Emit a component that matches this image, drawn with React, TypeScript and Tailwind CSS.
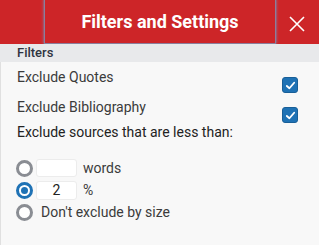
export default function App() {
  return (
    <div className="w-[319px] h-[245px] flex flex-col bg-[#f8f8f8] font-['Roboto',sans-serif] text-[14px] text-[#3b3b3b]">
      {/* Header */}
      <div className="h-[44px] shrink-0 bg-[#cd2528] flex items-start">
        <div className="ml-[45px] w-[230px] h-[43px] flex items-center justify-center text-white text-[18px] font-bold shadow-[0_0_1px_1px_#8a7f9c,0_0_3px_1px_#7d8bb8]">
          Filters and Settings
        </div>
        <button className="ml-[14px] mt-[16px] w-[16px] h-[16px]" aria-label="Close">
          <svg viewBox="0 0 16 16" className="w-4 h-4" fill="none" stroke="white" strokeWidth="1.6">
            <path d="M1 1 L15 15 M15 1 L1 15" />
          </svg>
        </button>
      </div>

      {/* Section label */}
      <div className="h-[18px] shrink-0 bg-[#e8e9eb] pl-[17px] leading-[18px] text-[13px] font-medium text-[#2f3440]">
        Filters
      </div>

      {/* Body */}
      <div className="flex-1 border-l border-[#e0e0e0] pt-[7px] pr-[21px]">
        <div className="flex items-start justify-between">
          <span className="pl-[16px] leading-[16px]">Exclude Quotes</span>
          <Checkbox />
        </div>
        <div className="flex items-start justify-between mt-[6px]">
          <span className="pl-[16px] leading-[16px]">Exclude Bibliography</span>
          <Checkbox />
        </div>
        <div className="mt-[1px] pl-[16px] leading-[16px] text-[#222]">Exclude sources that are less than:</div>

        <div className="mt-[19px] pl-[15px] flex flex-col gap-[4px]">
          <div className="flex items-center h-[18px]">
            <Radio />
            <div className="ml-[3px] w-[41px] h-[18px] bg-white rounded-[3px] border border-[#ececec]" />
            <span className="ml-[6px]">words</span>
          </div>
          <div className="flex items-center h-[19px]">
            <Radio checked />
            <div className="ml-[3px] w-[41px] h-[19px] bg-white rounded-[3px] border border-[#ececec] flex items-center justify-center text-[#222]">
              2
            </div>
            <span className="ml-[6px]">%</span>
          </div>
          <div className="flex items-center h-[18px] -mt-[1px]">
            <Radio />
            <span className="ml-[8px]">Don't exclude by size</span>
          </div>
        </div>
      </div>
    </div>
  )
}

function Checkbox() {
  return (
    <div className="mt-[8px] w-[16px] h-[16px] rounded-[3px] bg-[#1f72b5] border border-[#195f98] flex items-center justify-center">
      <svg viewBox="0 0 12 12" className="w-[11px] h-[11px]" fill="none" stroke="white" strokeWidth="2" strokeLinecap="round" strokeLinejoin="round">
        <path d="M2 6.5 L4.8 9 L10 3" />
      </svg>
    </div>
  )
}

function Radio({ checked = false }: { checked?: boolean }) {
  return (
    <div
      className={`w-[17px] h-[17px] rounded-full border-[3px] bg-white flex items-center justify-center shrink-0 ${
        checked ? 'border-[#1f72b5]' : 'border-[#8a8d93]'
      }`}
    >
      {checked && <div className="w-[7px] h-[7px] rounded-full bg-[#1f72b5]" />}
    </div>
  )
}
